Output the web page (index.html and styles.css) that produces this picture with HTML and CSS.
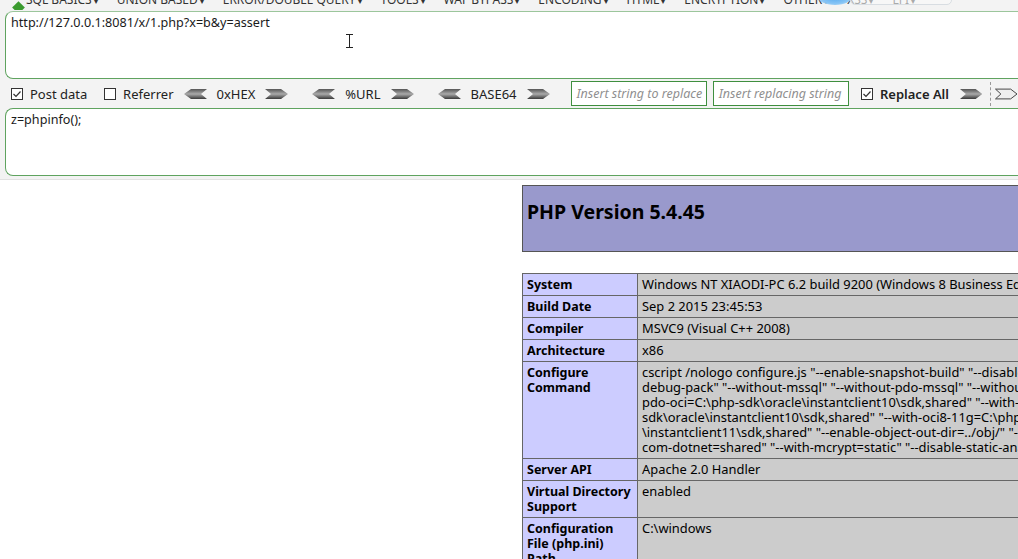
FILE: index.html
```html
<!DOCTYPE html>
<html>
<head>
<meta charset="utf-8">
<link rel="stylesheet" href="styles.css">
</head>
<body>
<div class="hackbar">
  <div class="menu">
    <span class="logo"></span>
    <span class="mi">SQL BASICS<i>▾</i></span>
    <span class="mi">UNION BASED<i>▾</i></span>
    <span class="mi">ERROR/DOUBLE QUERY<i>▾</i></span>
    <span class="mi">TOOLS<i>▾</i></span>
    <span class="mi">WAF BYPASS<i>▾</i></span>
    <span class="mi">ENCODING<i>▾</i></span>
    <span class="mi">HTML<i>▾</i></span>
    <span class="mi">ENCRYPTION<i>▾</i></span>
    <span class="mi">OTHER<i>▾</i></span>
    <span class="mi">XSS<i>▾</i></span>
    <span class="mi">LFI<i>▾</i></span>
    <span class="blob"></span>
    <span class="pill"></span>
  </div>
  <div class="box url">
    <div class="boxtext">http://127.0.0.1:8081/x/1.php?x=b&amp;y=assert</div>
    <svg class="ibeam" width="9" height="14" viewBox="0 0 9 14"><path d="M1 0.5h7M4.5 0.5v13M1 13.5h7" stroke="#222" stroke-width="1" fill="none"/></svg>
  </div>
  <div class="tools">
    <span class="cb checked"><svg width="10" height="10" viewBox="0 0 10 10"><path d="M1.5 5l2.5 2.5 4.5-5" stroke="#333" stroke-width="1.2" fill="none"/></svg></span>
    <span class="lbl">Post data</span>
    <span class="cb cb2"></span>
    <span class="lbl">Referrer</span>
    <span class="enc first">
      <svg class="arr" width="23" height="10" viewBox="0 0 23 10"><polygon points="0,5 7,0 23,0 17,5 23,10 7,10" fill="url(#g)"/></svg>
      <span class="lbl">0xHEX</span>
      <svg class="arr" width="23" height="10" viewBox="0 0 23 10"><polygon points="0,0 16,0 23,5 16,10 0,10 6,5" fill="url(#g)"/></svg>
    </span>
    <span class="enc">
      <svg class="arr" width="23" height="10" viewBox="0 0 23 10"><polygon points="0,5 7,0 23,0 17,5 23,10 7,10" fill="url(#g)"/></svg>
      <span class="lbl">%URL</span>
      <svg class="arr" width="23" height="10" viewBox="0 0 23 10"><polygon points="0,0 16,0 23,5 16,10 0,10 6,5" fill="url(#g)"/></svg>
    </span>
    <span class="enc">
      <svg class="arr" width="23" height="10" viewBox="0 0 23 10"><polygon points="0,5 7,0 23,0 17,5 23,10 7,10" fill="url(#g)"/></svg>
      <span class="lbl">BASE64</span>
      <svg class="arr" width="23" height="10" viewBox="0 0 23 10"><polygon points="0,0 16,0 23,5 16,10 0,10 6,5" fill="url(#g)"/></svg>
    </span>
    <span class="inp">Insert string to replace</span>
    <span class="inp inp2">Insert replacing string</span>
    <span class="cb checked cb3"><svg width="10" height="10" viewBox="0 0 10 10"><path d="M1.5 5l2.5 2.5 4.5-5" stroke="#333" stroke-width="1.2" fill="none"/></svg></span>
    <span class="lbl bold">Replace All</span>
    <svg class="arr arr-ra" width="23" height="10" viewBox="0 0 23 10"><polygon points="0,0 16,0 23,5 16,10 0,10 6,5" fill="url(#g)"/></svg>
    <span class="sep"></span>
    <svg class="arr arr-last" width="23" height="12" viewBox="0 0 23 12"><polygon points="0.5,1 16,1 22.5,6 16,11 0.5,11 6,6" fill="#eee" stroke="#444" stroke-width="1"/></svg>
    <svg width="0" height="0" class="defs"><defs><linearGradient id="g" x1="0" y1="0" x2="0" y2="1"><stop offset="0" stop-color="#555"/><stop offset="0.5" stop-color="#aaa"/><stop offset="1" stop-color="#3a3a3a"/></linearGradient></defs></svg>
  </div>
  <div class="box post">
    <div class="boxtext">z=phpinfo();</div>
  </div>
</div>
<div class="page">
  <div class="center">
    <div class="head"><h1>PHP Version 5.4.45</h1></div>
    <table class="info">
      <colgroup><col class="c1"><col class="c2"></colgroup>
      <tr><td class="e">System</td><td class="v">Windows NT XIAODI-PC 6.2 build 9200 (Windows 8 Business Edition) i586</td></tr>
      <tr><td class="e">Build Date</td><td class="v">Sep 2 2015 23:45:53</td></tr>
      <tr><td class="e">Compiler</td><td class="v">MSVC9 (Visual C++ 2008)</td></tr>
      <tr><td class="e">Architecture</td><td class="v">x86</td></tr>
      <tr><td class="e">Configure Command</td><td class="v">cscript /nologo configure.js "--enable-snapshot-build" "--disable-isapi" "--enable-<br>debug-pack" "--without-mssql" "--without-pdo-mssql" "--without-pi3web" "--with-<br>pdo-oci=C:\php-sdk\oracle\instantclient10\sdk,shared" "--with-oci8=C:\php-<br>sdk\oracle\instantclient10\sdk,shared" "--with-oci8-11g=C:\php-sdk\oracle<br>\instantclient11\sdk,shared" "--enable-object-out-dir=../obj/" "--enable-<br>com-dotnet=shared" "--with-mcrypt=static" "--disable-static-analyze" "--with-pgo"</td></tr>
      <tr><td class="e">Server API</td><td class="v">Apache 2.0 Handler</td></tr>
      <tr><td class="e">Virtual Directory Support</td><td class="v">enabled</td></tr>
      <tr><td class="e">Configuration File (php.ini) Path</td><td class="v">C:\windows</td></tr>
    </table>
  </div>
</div>
</body>
</html>
```
FILE: styles.css
```css
html, body {
  margin: 0;
  padding: 0;
  overflow: hidden;
  background: #fff;
  font-family: "Noto Sans", "Open Sans", sans-serif;
  color: #222;
}
.hackbar {
  background: #f3f3f3;
  padding: 0 0 3px 5px;
  border-bottom: 1px solid #e2e2e2;
  height: 176px;
}
.menu {
  position: relative;
  height: 10px;
  display: flex;
  align-items: flex-end;
  overflow: hidden;
  font-size: 12px;
  line-height: 18px;
  color: #333;
  white-space: nowrap;
}
.menu .mi {
  margin-right: 19px;
}
.menu .mi i {
  font-style: normal;
  font-size: 8px;
  margin-left: 2px;
}
.menu .logo {
  width: 9px;
  height: 9px;
  background: #3b9b2f;
  transform: rotate(45deg);
  margin: 0 3px -2px 9px;
  align-self: flex-end;
}
.menu .blob {
  position: absolute;
  left: 812px;
  top: -14px;
  width: 36px;
  height: 19px;
  border-radius: 50%;
  background: radial-gradient(ellipse at center, #4aa3ee 0%, #86c4f5 60%, rgba(180,220,250,0.3) 100%);
}
.menu .pill {
  position: absolute;
  left: 845px;
  top: -8px;
  width: 100px;
  height: 11px;
  border: 1px solid #d8dde2;
  border-radius: 5px;
  background: rgba(250,250,250,0.6);
}
.box {
  position: relative;
  background: #fff;
  border: 1px solid #5fa35f;
  border-top-color: #9cc69c;
  border-radius: 8px 0 0 8px;
  border-right: none;
  box-sizing: border-box;
  height: 68px;
  padding: 3px 5px;
  font-size: 12.6px;
  line-height: 16px;
  color: #1a1a1a;
}
.url {
  margin-top: 1px;
}
.post {
  border-top-color: #5fa35f;
}
.ibeam {
  position: absolute;
  left: 339px;
  top: 22px;
}
.tools {
  display: flex;
  align-items: center;
  height: 29px;
  font-size: 13px;
  color: #222;
  white-space: nowrap;
}
.cb {
  width: 12px;
  height: 12px;
  box-sizing: border-box;
  border: 1px solid #333;
  background: #fff;
  display: flex;
  align-items: center;
  justify-content: center;
  margin-left: 6px;
  margin-right: 7px;
}
.cb2 {
  margin-left: 17px;
}
.cb3 {
  margin-left: 12px;
}
.lbl.bold {
  font-weight: 600;
}
.enc {
  display: flex;
  align-items: center;
  gap: 10px;
  margin-left: 24px;
}
.enc.first {
  margin-left: 10px;
}
.arr {
  display: block;
}
.inp {
  box-sizing: border-box;
  width: 139px;
  height: 25px;
  border: 1px solid #3f8f3f;
  background: #fff;
  color: #8f8f8f;
  font-style: italic;
  font-size: 12.5px;
  line-height: 23px;
  padding: 0 5px;
  overflow: hidden;
  margin-left: 21px;
}
.inp2 {
  margin-left: 6px;
}
.arr-ra {
  margin-left: 11px;
}
.sep {
  width: 0;
  height: 24px;
  border-left: 1px dashed #999;
  margin: 0 4px 0 8px;
}
.defs {
  position: absolute;
}
.page {
  padding: 5px 0 0 522px;
}
.center {
  width: 600px;
}
.head {
  background: #9999cc;
  border: 1px solid #555;
  height: 67px;
  box-sizing: border-box;
  padding: 13px 4px 0;
}
.head h1 {
  margin: 0;
  font-size: 19.5px;
  line-height: 26px;
  font-weight: 700;
  color: #000;
}
.info {
  margin-top: 21px;
  width: 600px;
  table-layout: fixed;
  border-collapse: collapse;
  font-size: 12.9px;
  line-height: 15px;
}
.info .c1 {
  width: 115px;
}
.info .c2 {
  width: 485px;
}
.info td {
  border: 1px solid #666;
  padding: 3px 4px;
  vertical-align: top;
  color: #000;
}
.info .e {
  background: #ccccff;
  font-weight: 700;
  font-size: 12.5px;
}
.info .v {
  background: #cccccc;
  white-space: nowrap;
  overflow: hidden;
}
```
